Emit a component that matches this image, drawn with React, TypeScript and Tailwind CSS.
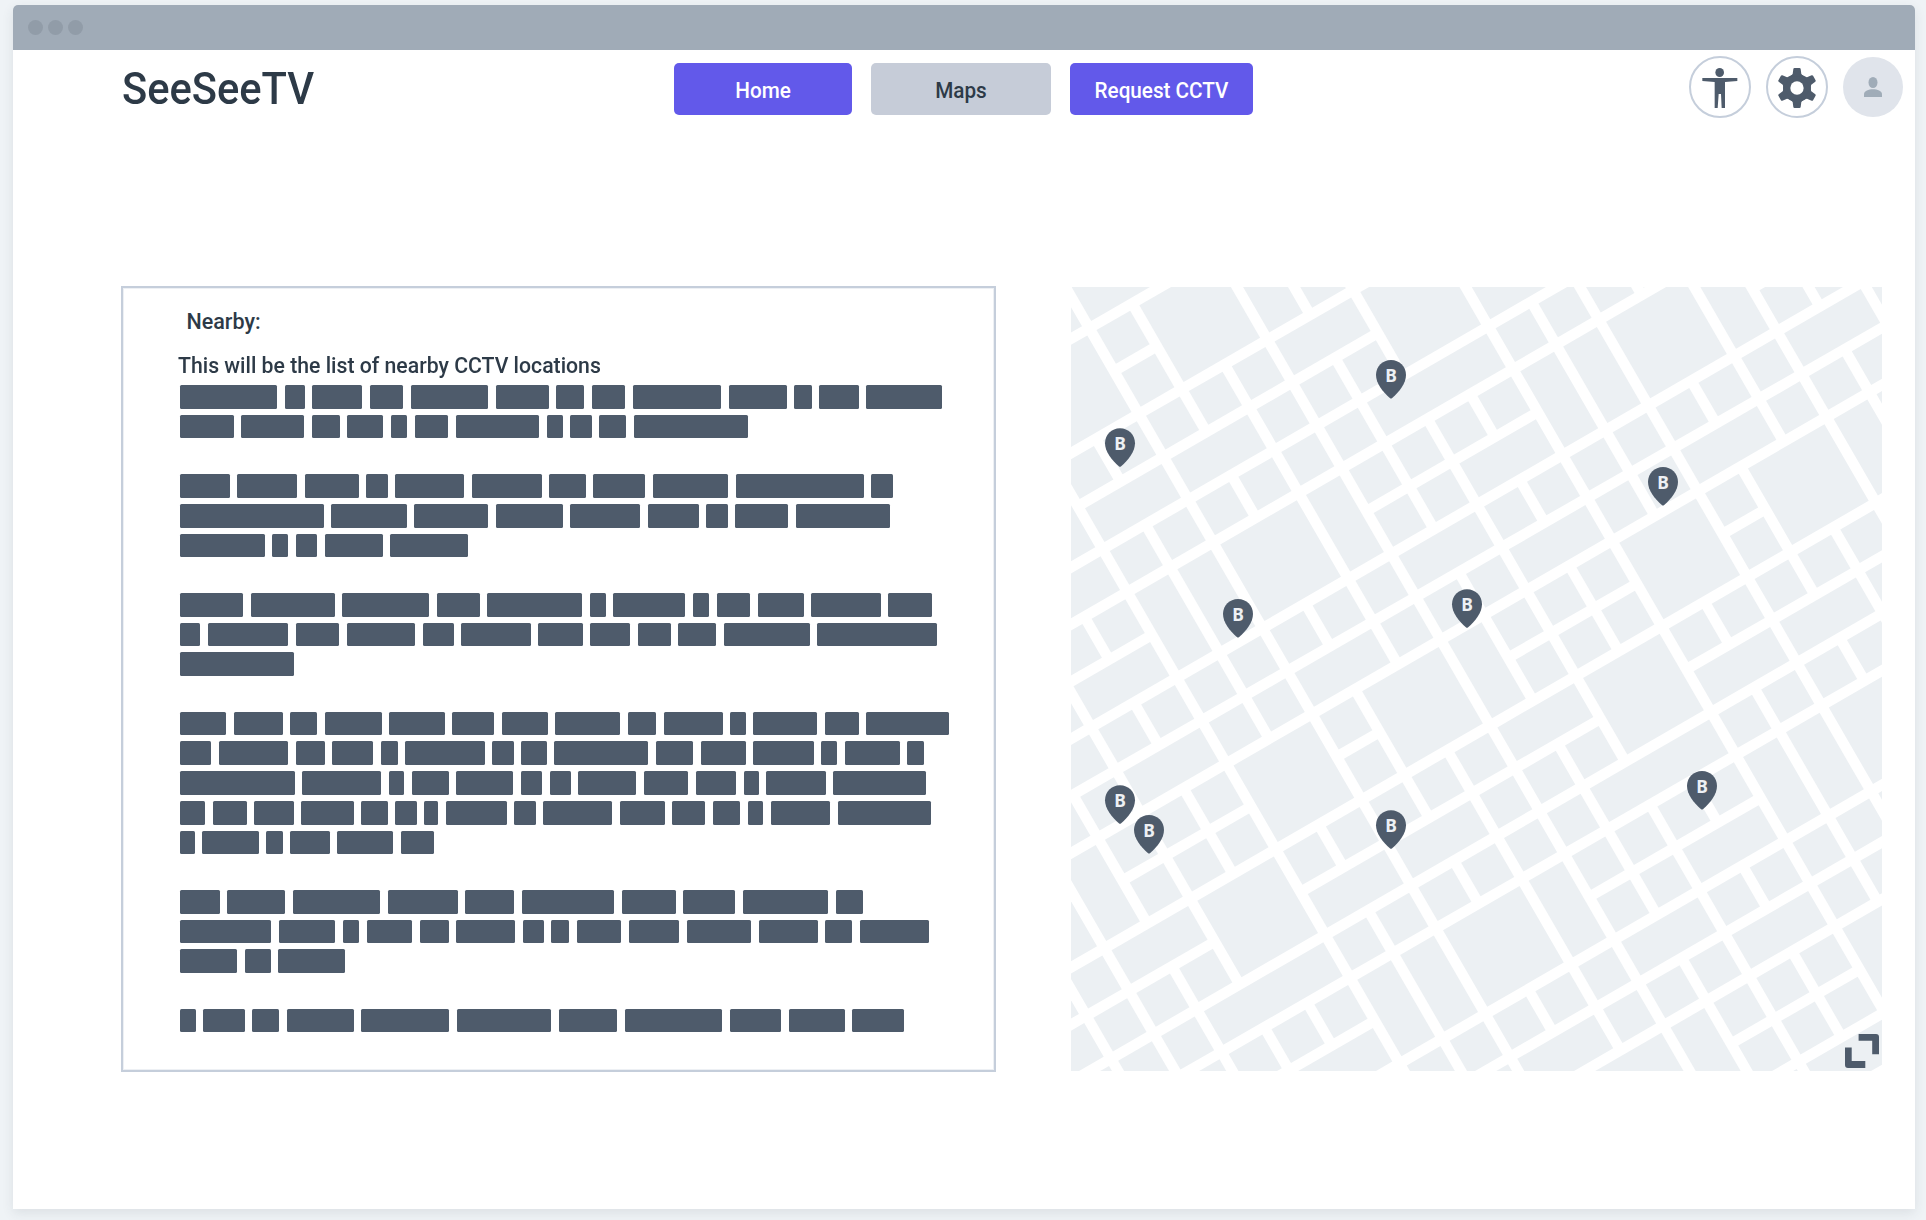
import React from "react";

/* ---------- Placeholder text ---------- */

// Right edge of every word, in thirds of a pixel; an empty row is a paragraph break.
const WORD_START = 208.5;
const WORD_GAP = 23;
const ROWS: number[][] = [
  [501, 584, 756, 879, 1134, 1316, 1423, 1546, 1833, 2030, 2105, 2246, 2495],
  [371, 582, 689, 819, 891, 1014, 1287, 1358, 1445, 1548, 1915],
  [],
  [359, 561, 746, 833, 1062, 1295, 1427, 1605, 1854, 2261, 2348],
  [641, 890, 1134, 1358, 1590, 1766, 1853, 2034, 2340],
  [464, 534, 621, 818, 1074],
  [],
  [399, 674, 957, 1109, 1416, 1487, 1725, 1797, 1920, 2081, 2312, 2465],
  [270, 534, 687, 915, 1031, 1262, 1418, 1560, 1682, 1818, 2099, 2481],
  [553],
  [],
  [348, 518, 621, 815, 1004, 1153, 1313, 1530, 1639, 1838, 1907, 2123, 2247, 2517],
  [303, 534, 644, 789, 863, 1124, 1211, 1310, 1614, 1749, 1907, 2112, 2183, 2370, 2442],
  [554, 813, 882, 1016, 1209, 1296, 1382, 1578, 1735, 1878, 1947, 2148, 2448],
  [286, 410, 551, 731, 833, 920, 985, 1190, 1277, 1506, 1664, 1787, 1892, 1960, 2162, 2463],
  [254, 446, 518, 659, 849, 971],
  [],
  [329, 525, 811, 1043, 1212, 1512, 1697, 1876, 2154, 2258],
  [483, 675, 747, 906, 1016, 1215, 1301, 1377, 1534, 1708, 1923, 2124, 2228, 2457],
  [381, 482, 705],
  [],
  [257, 404, 508, 731, 1017, 1323, 1522, 1836, 2013, 2204, 2382],
];

function WordRow({ edges }: { edges: number[] }) {
  return (
    <div className="flex h-[29.71px] gap-[7.667px]">
      {edges.map((edge, k) => {
        const start = k === 0 ? WORD_START : edges[k - 1] + WORD_GAP;
        return (
          <span
            key={k}
            className="h-[23.7px] shrink-0 rounded-[1.5px] bg-[#4e5b6b]"
            style={{ width: (edge - start) / 3 }}
          />
        );
      })}
    </div>
  );
}

/* ---------- Street map ---------- */

// City blocks that span more than one grid cell: column, row, width, height.
const MERGED: [number, number, number, number][] = [
  [0, -1, 2, 1], [-2, 0, 2, 2], [1, 0, 2, 2], [3, 0, 1, 2], [3, 2, 2, 1], [5, 2, 2, 2],
  [-4, 2, 2, 2], [0, 3, 2, 1], [-2, 3, 2, 1], [7, 3, 2, 1], [4, 4, 3, 1], [-4, 4, 2, 1],
  [0, 5, 2, 2], [2, 5, 1, 2], [-1, 5, 1, 2], [-2, 5, 1, 2], [7, 5, 1, 2], [8, 5, 1, 2],
  [9, 5, 2, 2], [11, 5, 1, 2], [5, 6, 2, 1], [-4, 6, 2, 1], [3, 7, 2, 1], [12, 7, 2, 1],
  [-6, 7, 2, 1], [-4, 8, 2, 1], [0, 8, 2, 1], [5, 8, 2, 1], [9, 8, 2, 1], [1, 9, 2, 2],
  [3, 9, 1, 2], [7, 9, 2, 2], [10, 9, 2, 2], [12, 9, 1, 2], [-2, 9, 2, 2], [-6, 9, 1, 2],
  [-7, 9, 1, 2], [3, 11, 2, 1], [5, 11, 2, 2], [-4, 11, 2, 2], [-6, 11, 2, 1], [-2, 12, 2, 1],
  [0, 12, 2, 1], [7, 12, 2, 1], [9, 12, 2, 1], [4, 13, 3, 1], [-5, 13, 3, 1], [0, 14, 2, 2],
  [2, 14, 1, 2], [7, 14, 1, 2], [8, 14, 1, 2], [9, 14, 2, 2], [-1, 14, 1, 2], [-2, 14, 1, 2],
  [5, 15, 2, 1], [-4, 15, 2, 1], [3, 16, 2, 1], [0, 17, 2, 1], [5, 17, 2, 1], [1, 18, 2, 2],
  [3, 18, 1, 2], [7, 18, 2, 2], [5, 20, 3, 1],
];

const PITCH = 49.5;
const ROAD = 10.6;

function buildBlocks() {
  const taken = new Set<string>();
  for (const [c, r, w, h] of MERGED)
    for (let x = c; x < c + w; x++) for (let y = r; y < r + h; y++) taken.add(`${x},${y}`);
  const blocks = [...MERGED];
  for (let r = -1; r <= 21; r++)
    for (let c = -9; c <= 15; c++) if (!taken.has(`${c},${r}`)) blocks.push([c, r, 1, 1]);
  return blocks;
}

const BLOCKS = buildBlocks();

const PINS = [
  [49, 141.3], [320, 73], [167, 312], [396, 302.3], [592, 180],
  [49, 498.3], [78, 528], [320, 523.3], [631, 484],
];

function StreetMap() {
  return (
    <svg width="811" height="784" viewBox="0 0 811 784" className="block" aria-label="Map">
      <g transform="translate(25.5 43.1) rotate(-30)" fill="#ecf0f3">
        {BLOCKS.map(([c, r, w, h]) => (
          <rect
            key={`${c},${r}`}
            x={c * PITCH}
            y={r * PITCH}
            width={w * PITCH - ROAD}
            height={h * PITCH - ROAD}
          />
        ))}
      </g>
      {PINS.map(([x, y]) => (
        <g key={`${x}-${y}`} transform={`translate(${x} ${y})`}>
          <path
            d="M0 0C8.4 0 15 6.6 15 15C15 23 8.4 32 0.9 38.2Q0 38.9 -0.9 38.2C-8.4 32 -15 23 -15 15C-15 6.6 -8.4 0 0 0Z"
            fill="#4e5b6b"
          />
          <text
            x="0"
            y="21.5"
            textAnchor="middle"
            className="font-['Noto_Sans'] text-[17.5px] font-bold"
            fill="#edf0f4"
          >
            B
          </text>
        </g>
      ))}
    </svg>
  );
}

/* ---------- Icons ---------- */

function PersonArmsOut() {
  return (
    <svg width="36" height="40" viewBox="0 0 108 120" fill="#4e5b6b" className="mt-[2px]">
      <ellipse cx="53" cy="13.5" rx="13" ry="13.5" />
      <path d="M1 30H106V39L69 42V120H59L57 78H50L47 120H38V42L1 39Z" />
    </svg>
  );
}

function Gear() {
  return (
    <svg width="40" height="40" viewBox="-60 -60 120 120" fill="#4e5b6b" className="mt-[2px]">
      <mask id="gear-hole">
        <rect x="-60" y="-60" width="120" height="120" fill="white" />
        <circle r="20" fill="black" />
      </mask>
      <g mask="url(#gear-hole)">
        <circle r="42" />
        {[0, 60, 120, 180, 240, 300].map((a) => (
          <path
            key={a}
            transform={`rotate(${a})`}
            d="M-11 -57Q-10.5 -60 -7.5 -60H7.5Q10.5 -60 11 -57L13 -42L20 -34H-20L-13 -42Z"
          />
        ))}
      </g>
    </svg>
  );
}

function Avatar() {
  return (
    <svg width="18" height="20" viewBox="0 0 54 60" fill="#a0acb8">
      <ellipse cx="27" cy="16.5" rx="13.5" ry="16.5" />
      <path d="M0 60V52C0 42 14 37 27 37S54 42 54 52V60Z" />
    </svg>
  );
}

function Expand() {
  return (
    <svg width="34" height="34" viewBox="0 0 34 34" fill="#4e5b6b">
      <path d="M13.6 0H31Q34 0 34 3V20.3H27.2V6.7H13.6Z" />
      <path d="M0 13.5H6.7V27H20.3V34H3Q0 34 0 31Z" />
    </svg>
  );
}

/* ---------- Page ---------- */

function RoundButton({ label, children }: { label: string; children: React.ReactNode }) {
  return (
    <button
      aria-label={label}
      className="flex size-[62px] items-center justify-center rounded-full border-2 border-[#c5cedb]"
    >
      {children}
    </button>
  );
}

function NavLabel({ children }: { children: React.ReactNode }) {
  return <span className="block origin-center translate-y-px scale-x-[0.94]">{children}</span>;
}

export default function App() {
  return (
    <div className="h-[1220px] w-[1926px] overflow-hidden bg-[#eff3f6] pt-[5px] pl-[13px] font-['Roboto',sans-serif] text-[#2d3a47]">
      <div className="flex h-[1204px] w-[1902px] flex-col rounded-t-[5px] bg-white shadow-[0_4px_12px_rgba(45,58,71,0.1)]">
        <div className="flex h-[45px] shrink-0 items-center gap-[5px] rounded-t-[5px] bg-[#a0abb7] pl-[15px]">
          <span className="size-[15px] rounded-full bg-[#919ca8]" />
          <span className="size-[15px] rounded-full bg-[#919ca8]" />
          <span className="size-[15px] rounded-full bg-[#919ca8]" />
        </div>

        <header className="flex h-[75px] shrink-0 items-start pl-[109px]">
          <h1 className="mt-[14px] w-[552px] origin-left scale-x-[0.957] text-[43.5px] leading-[52px] font-medium whitespace-nowrap">
            SeeSeeTV
          </h1>
          <nav className="mt-[13px] flex text-[22px] font-medium">
            <button className="h-[52px] w-[178px] rounded-[5px] bg-[#6259ea] text-white">
              <NavLabel>Home</NavLabel>
            </button>
            <button className="ml-[19px] h-[52px] w-[180px] rounded-[5px] bg-[#c6ccd8]">
              <NavLabel>Maps</NavLabel>
            </button>
            <button className="ml-[19px] h-[52px] w-[183px] rounded-[5px] bg-[#6259ea] text-white">
              <NavLabel>Request CCTV</NavLabel>
            </button>
          </nav>
          <div className="mt-[6px] ml-auto flex items-center gap-[15px] pr-3">
            <RoundButton label="Accessibility">
              <PersonArmsOut />
            </RoundButton>
            <RoundButton label="Settings">
              <Gear />
            </RoundButton>
            <button
              aria-label="Account"
              className="flex size-[60px] items-center justify-center rounded-full bg-[#e0e4eb]"
            >
              <Avatar />
            </button>
          </div>
        </header>

        <main className="mt-[161px] flex items-start pl-[108px]">
          <section className="h-[786px] w-[875px] border-2 border-[#c5cedb] pl-[56.5px] shadow-[inset_0_0_0_1px_#edf0f4]">
            <h2 className="mt-[20px] pl-[7px] text-[21.5px] leading-[28px] font-medium whitespace-nowrap">
              Nearby:
            </h2>
            <p className="mt-[16px] -ml-[2px] origin-left scale-x-[0.987] text-[21.5px] leading-[28px] font-medium whitespace-nowrap">
              This will be the list of nearby CCTV locations
            </p>
            <div className="mt-[5px]">
              {ROWS.map((edges, i) => (
                <WordRow key={i} edges={edges} />
              ))}
            </div>
          </section>
          <section className="relative mt-px ml-[75px]">
            <StreetMap />
            <button aria-label="Expand map" className="absolute right-[3px] bottom-[3px]">
              <Expand />
            </button>
          </section>
        </main>
      </div>
    </div>
  );
}
